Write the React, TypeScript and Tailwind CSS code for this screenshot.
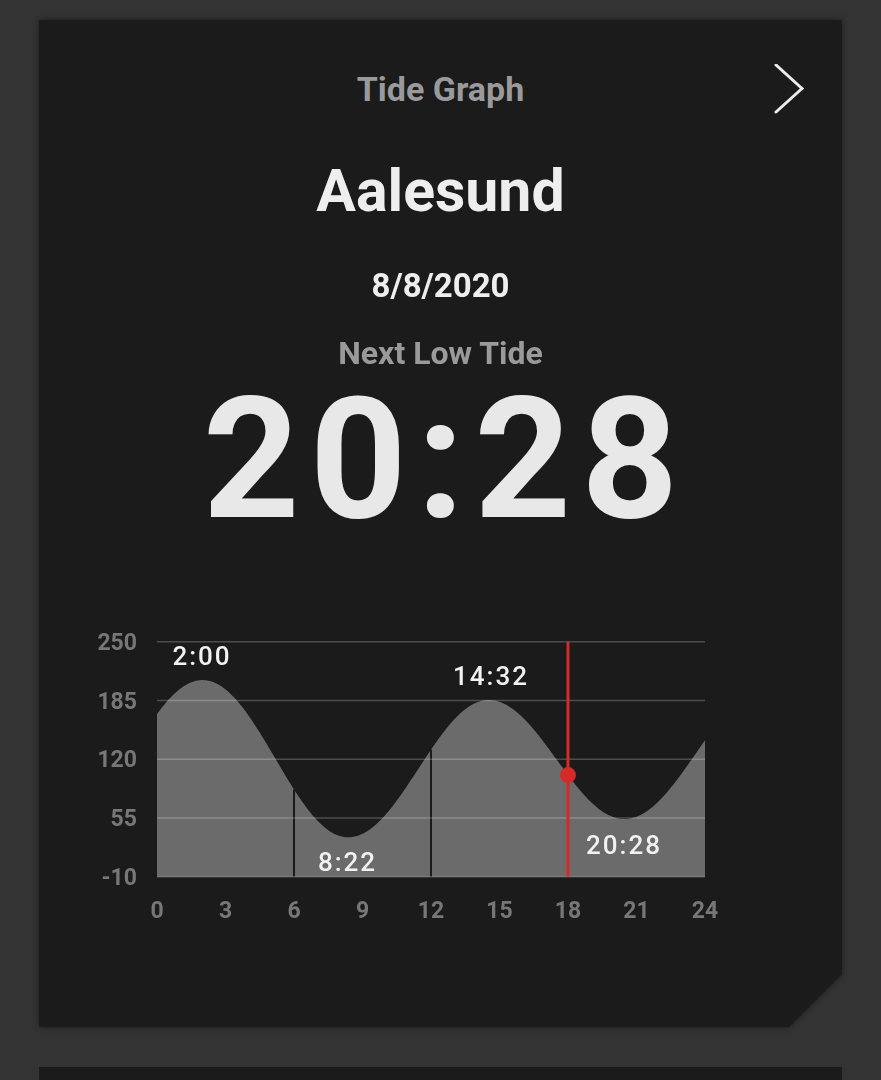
import React from "react";

const X0 = 118; // local x of hour 0
const PX_H = 22.833;
const yOf = (v: number) => 256.7 - (v + 10) * 0.9038;
const xOf = (h: number) => X0 + h * PX_H;

const extremes: [number, number][] = [
  [-4.37, 40],
  [2.0, 207.6],
  [8.37, 33.6],
  [14.53, 185.5],
  [20.47, 53.8],
  [26.7, 198],
];

function tide(t: number): number {
  for (let i = 0; i < extremes.length - 1; i++) {
    const [t0, a] = extremes[i];
    const [t1, b] = extremes[i + 1];
    if (t >= t0 && t <= t1) {
      const f = (t - t0) / (t1 - t0);
      return a + (b - a) * (1 - Math.cos(Math.PI * f)) / 2;
    }
  }
  return 0;
}

function areaPath(): string {
  const pts: string[] = [];
  for (let i = 0; i <= 480; i++) {
    const h = (i / 480) * 24;
    pts.push(`${xOf(h).toFixed(2)},${yOf(tide(h)).toFixed(2)}`);
  }
  return `M${xOf(0)},${yOf(-10)} L${pts.join(" L")} L${xOf(24)},${yOf(-10)} Z`;
}

const font = "Roboto, 'Noto Sans', sans-serif";

function Chart() {
  const grid = [250, 185, 120, 55, -10];
  const hours = [0, 3, 6, 9, 12, 15, 18, 21, 24];
  const redY = yOf(tide(18));
  return (
    <svg width={803} height={330} viewBox="0 0 803 330" className="block">
      <path d={areaPath()} fill="#6b6b6b" />
      {[6, 12].map((h) => (
        <line
          key={h}
          x1={xOf(h)}
          x2={xOf(h)}
          y1={yOf(tide(h))}
          y2={yOf(-10)}
          stroke="#1b1b1b"
          strokeWidth={2}
        />
      ))}
      {grid.map((g) => (
        <line
          key={g}
          x1={xOf(0)}
          x2={xOf(24)}
          y1={yOf(g)}
          y2={yOf(g)}
          stroke="rgba(255,255,255,0.22)"
          strokeWidth={1.5}
        />
      ))}
      {grid.map((g) => (
        <text
          key={"l" + g}
          x={98}
          y={yOf(g) + 8.2}
          textAnchor="end"
          fill="#777777"
          fontFamily={font}
          fontWeight={700}
          fontSize={23}
        >
          {g}
        </text>
      ))}
      {hours.map((h) => (
        <text
          key={"h" + h}
          x={xOf(h)}
          y={290 + 8.2}
          textAnchor="middle"
          fill="#777777"
          fontFamily={font}
          fontWeight={700}
          fontSize={23}
        >
          {h}
        </text>
      ))}
      <line x1={xOf(18)} x2={xOf(18)} y1={yOf(250)} y2={yOf(-10)} stroke="#d42a2a" strokeWidth={3} />
      <circle cx={xOf(18)} cy={redY} r={8} fill="#d42a2a" />
      {[
        ["2:00", 163, 35.5],
        ["14:32", 452, 56],
        ["8:22", 308.5, 242],
        ["20:28", 585, 225],
      ].map(([t, x, y]) => (
        <text
          key={t as string}
          x={x as number}
          y={(y as number) + 9.2}
          textAnchor="middle"
          fill="#f2f2f2"
          fontFamily={font}
          fontWeight={500}
          fontSize={26}
          letterSpacing={2}
        >
          {t}
        </text>
      ))}
    </svg>
  );
}

export default function App() {
  return (
    <div className="h-[1080px] bg-[#333333] px-[39px] pt-[20px] overflow-hidden" style={{ fontFamily: font }}>
      <div className="[filter:drop-shadow(0_0_3px_rgba(0,0,0,0.45))]">
        <div className="h-[1007px] bg-[#1b1b1b] [clip-path:polygon(0_0,100%_0,100%_calc(100%-53px),calc(100%-53px)_100%,0_100%)] flex flex-col items-center">
          <div className="w-full grid grid-cols-[1fr_auto_1fr] grid-rows-[50px] items-center h-[50px] mt-[44px]">
            <div />
            <div className="text-[34px] font-bold text-[#9a9a9a] leading-none">Tide Graph</div>
            <div className="flex justify-end pr-[36px]">
              <svg width="32" height="50" viewBox="0 0 32 50" className="block">
                <polyline points="2,1 28,24.5 2,48" fill="none" stroke="#ececec" strokeWidth="3" strokeLinecap="round" strokeLinejoin="miter" />
              </svg>
            </div>
          </div>
          <div className="mt-[46px] h-[60px] flex items-center text-[59px] font-bold text-[#eeeeee] leading-none">Aalesund</div>
          <div className="mt-[45px] h-[40px] flex items-center text-[33px] font-bold text-[#eeeeee] leading-none">8/8/2020</div>
          <div className="mt-[28px] h-[40px] flex items-center text-[32px] font-bold text-[#9a9a9a] leading-none">Next Low Tide</div>
          <div className="mt-[21px] h-[130px] text-[169px] font-bold text-[#e8e8e8] leading-[130px] tracking-[10px] pl-[10px]">20:28</div>
          <div className="mt-[96px] w-full">
            <Chart />
          </div>
        </div>
      </div>
      <div className="mt-[40px] h-[200px] bg-[#1b1b1b]" />
    </div>
  );
}
